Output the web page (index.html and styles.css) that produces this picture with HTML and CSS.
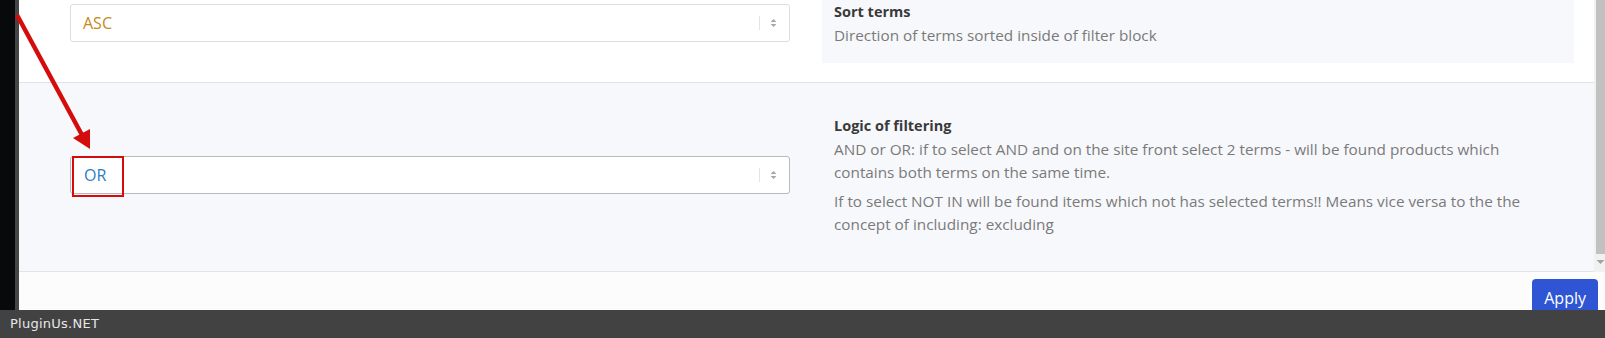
FILE: index.html
```html
<!DOCTYPE html>
<html lang="en">
<head>
<meta charset="utf-8">
<title>Filter settings</title>
<link rel="stylesheet" href="styles.css">
</head>
<body>
<div class="page">
  <div class="side"></div>
  <div class="main">
    <div class="scroll">
      <div class="rows">
        <div class="row row-sort">
          <div class="field">
            <div class="select select-asc">
              <span class="value">ASC</span>
              <span class="sep"></span>
              <svg class="caret" width="7" height="10" viewBox="0 0 7 10"><path d="M3.5 1 L6.5 4 H0.5 Z M3.5 9 L6.5 6 H0.5 Z" fill="#a8a8a8"/></svg>
            </div>
          </div>
          <div class="desc desc-box">
            <div class="title">Sort terms</div>
            <p>Direction of terms sorted inside of filter block</p>
          </div>
        </div>
        <div class="row row-logic">
          <div class="field">
            <div class="select select-or">
              <span class="value">OR</span>
              <span class="sep"></span>
              <svg class="caret" width="7" height="10" viewBox="0 0 7 10"><path d="M3.5 1 L6.5 4 H0.5 Z M3.5 9 L6.5 6 H0.5 Z" fill="#a8a8a8"/></svg>
            </div>
          </div>
          <div class="desc desc-wide">
            <div class="title">Logic of filtering</div>
            <p>AND or OR: if to select AND and on the site front select 2 terms - will be found products which contains both terms on the same time.</p>
            <p>If to select NOT IN will be found items which not has selected terms!! Means vice versa to the the concept of including: excluding</p>
          </div>
        </div>
      </div>
      <div class="scrollbar">
        <div class="thumb"></div>
        <div class="track">
          <svg width="9" height="6" viewBox="0 0 9 6"><path d="M0.5 1 H8.5 L4.5 5 Z" fill="#a3a3a3"/></svg>
        </div>
      </div>
    </div>
    <div class="footer">
      <button class="apply">Apply</button>
    </div>
  </div>
</div>
<div class="bottombar">PluginUs.NET</div>
<div class="redbox"></div>
<svg class="annot" width="120" height="160" viewBox="0 0 120 160">
  <line x1="17" y1="15" x2="82" y2="135" stroke="#d40c0c" stroke-width="4.5"/>
  <polygon points="90,149 73,138 90,129" fill="#d40c0c"/>
</svg>
</body>
</html>
```

FILE: styles.css
```css
html, body {
  margin: 0;
  padding: 0;
}
body {
  width: 1605px;
  height: 338px;
  overflow: hidden;
  position: relative;
  background: #fcfcfc;
  font-family: "Open Sans", "Noto Sans", sans-serif;
}
.page {
  display: flex;
  height: 310px;
}
.side {
  width: 15px;
  background: #08090b;
  border-right: 4px solid #454545;
  flex: none;
}
.main {
  flex: 1;
  display: flex;
  flex-direction: column;
  min-width: 0;
}
.scroll {
  display: flex;
  height: 272px;
}
.rows {
  flex: 1;
  display: flex;
  flex-direction: column;
}
.row {
  display: flex;
  padding: 0 20px 0 51px;
  gap: 32px;
  border-bottom: 1px solid #e2e3e6;
}
.row-sort {
  height: 82px;
  background: #ffffff;
  align-items: flex-start;
}
.row-logic {
  flex: 1;
  background: #f7f8fc;
  align-items: center;
  padding-bottom: 4px;
}
.field {
  width: 720px;
  flex: none;
}
.row-sort .field {
  margin-top: 4px;
}
.select {
  height: 38px;
  box-sizing: border-box;
  border: 1px solid #dcdde0;
  border-radius: 3px;
  background: #fff;
  display: flex;
  align-items: center;
  padding-left: 12px;
  font-size: 16px;
}
.select-or {
  border-color: #b9babd;
}
.value {
  flex: 1;
}
.select-asc .value {
  color: #c48a1a;
}
.select-or .value {
  color: #2c7cc0;
  padding-left: 1px;
}
.sep {
  width: 1px;
  height: 14px;
  background: #e3e3e3;
  margin-right: 10px;
}
.caret {
  margin-right: 12px;
}
.desc {
  flex: 1;
  padding: 0 12px;
  color: #7a7a7a;
  font-size: 15.3px;
  line-height: 23px;
}
.desc-wide {
  padding-right: 36px;
}
.desc-box {
  background: #f7f8fb;
  height: 63px;
  box-sizing: border-box;
}
.title {
  font-weight: 700;
  color: #3a3a3a;
  line-height: 24px;
  font-size: 14.5px;
}
.desc p {
  margin: 0;
}
.desc p + p {
  margin-top: 6px;
}
.scrollbar {
  width: 11px;
  flex: none;
  background: #f1f1f1;
  display: flex;
  flex-direction: column;
}
.thumb {
  height: 254px;
  margin-left: 2px;
  background: #c1c1c1;
}
.track {
  flex: 1;
  display: flex;
  justify-content: center;
  align-items: flex-start;
  padding-top: 5px;
  padding-left: 2px;
}
.track svg {
  display: block;
}
.footer {
  height: 38px;
  overflow: hidden;
  display: flex;
  justify-content: flex-end;
  align-items: flex-start;
  padding-right: 7px;
  background: #fcfcfc;
}
.apply {
  margin-top: 7px;
  height: 38px;
  padding: 0 12px;
  border: none;
  border-radius: 4px;
  background: #2f55d4;
  color: #fff;
  font-family: "Open Sans", "Noto Sans", sans-serif;
  font-size: 16px;
  line-height: 38px;
}
.bottombar {
  height: 28px;
  background: #424242;
  color: #e8e8e8;
  font-family: "DejaVu Sans", sans-serif;
  font-size: 13px;
  letter-spacing: 0.25px;
  line-height: 28px;
  padding-left: 10px;
}
.redbox {
  position: absolute;
  left: 72px;
  top: 156px;
  width: 48px;
  height: 37px;
  border: 2px solid #d40c0c;
}
.annot {
  position: absolute;
  left: 0;
  top: 0;
}
```
